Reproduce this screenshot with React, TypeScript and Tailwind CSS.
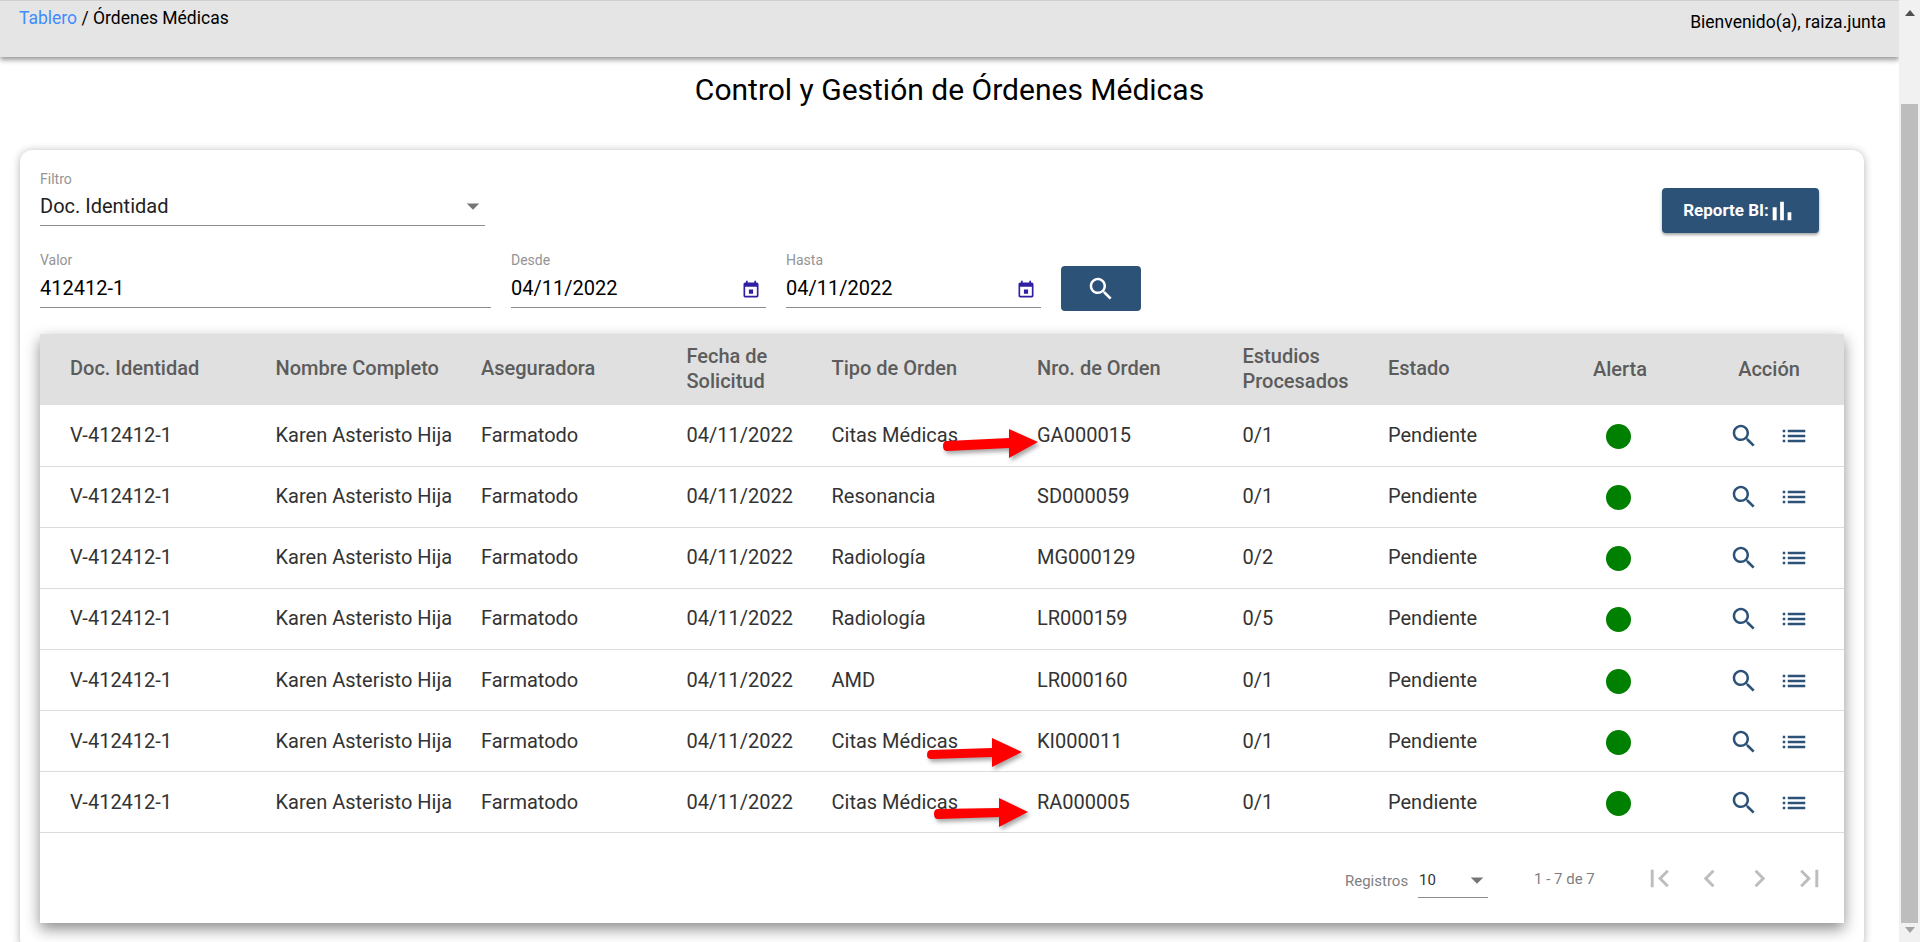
const font = "font-['Roboto',sans-serif]"

const rows = [
  { tipo: "Citas Médicas", orden: "GA000015", estudios: "0/1" },
  { tipo: "Resonancia", orden: "SD000059", estudios: "0/1" },
  { tipo: "Radiología", orden: "MG000129", estudios: "0/2" },
  { tipo: "Radiología", orden: "LR000159", estudios: "0/5" },
  { tipo: "AMD", orden: "LR000160", estudios: "0/1" },
  { tipo: "Citas Médicas", orden: "KI000011", estudios: "0/1" },
  { tipo: "Citas Médicas", orden: "RA000005", estudios: "0/1" },
]

function SearchIcon({ className }: { className: string }) {
  return (
    <svg viewBox="0 0 24 24" className={className} fill="currentColor">
      <path d="M15.5 14h-.79l-.28-.27C15.41 12.59 16 11.11 16 9.5 16 5.91 13.09 3 9.5 3S3 5.91 3 9.5 5.91 16 9.5 16c1.61 0 3.09-.59 4.23-1.57l.27.28v.79l5 4.99L20.49 19l-4.99-5zm-6 0C7.01 14 5 11.99 5 9.5S7.01 5 9.5 5 14 7.01 14 9.5 11.99 14 9.5 14z" />
    </svg>
  )
}

function ListIcon({ className }: { className: string }) {
  return (
    <svg viewBox="0 0 24 24" className={className} fill="currentColor">
      <path d="M3 13h2v-2H3v2zm0 4h2v-2H3v2zm0-8h2V7H3v2zm4 4h14v-2H7v2zm0 4h14v-2H7v2zM7 7v2h14V7H7z" />
    </svg>
  )
}

function CalendarIcon() {
  return (
    <svg viewBox="0 0 24 24" className="w-[20px] h-[20px] text-[#2f1fa3]" fill="currentColor">
      <path d="M14.5 11.5h-5v5h5v-5zM16 1v2H8V1H6v2H5c-1.11 0-1.99.9-1.99 2L3 19c0 1.1.89 2 2 2h14c1.1 0 2-.9 2-2V5c0-1.1-.9-2-2-2h-1V1h-2zm3 18H5V8h14v11z" />
    </svg>
  )
}

function Caret({ className }: { className: string }) {
  return (
    <svg viewBox="0 0 24 24" className={className} fill="currentColor">
      <path d="M7 10l5 5 5-5z" />
    </svg>
  )
}

function DateField({ label, width }: { label: string; width: string }) {
  return (
    <div className={width}>
      <div className="text-[14px] leading-[16px] -mt-[1px] mb-[1px] text-[#949494]">{label}</div>
      <div className="flex items-center justify-between h-[39px] border-b border-[#8c8c8c]">
        <span className="text-[20px] text-black">04/11/2022</span>
        <span className="mr-[5px] mt-[3px]">
          <CalendarIcon />
        </span>
      </div>
    </div>
  )
}

function Arrows() {
  return (
    <svg className="absolute left-0 top-0 w-[1920px] h-[942px] pointer-events-none drop-shadow-[2px_3px_2px_rgba(0,0,0,0.35)]" viewBox="0 0 1920 942">
      <path fill="#ff0000" d="M947 441 L1009 438 L1009 429 L1038 442 L1009 458 L1009 448 L947 451 Q943 451 943 446 Q943 441 947 441 Z" />
      <path fill="#ff0000" d="M931 750 L992 748 L992 738 L1022 752 L992 767 L992 757 L931 759 Q927 759 927 755 Q927 750 931 750 Z" />
      <path fill="#ff0000" d="M938 809 L999 808 L999 798 L1028 812 L999 827 L999 817 L938 819 Q934 819 934 814 Q934 809 938 809 Z" />
    </svg>
  )
}

export default function App() {
  const cols = ["w-[205.5px]", "w-[205.5px]", "w-[205.5px]", "w-[145px]", "w-[205.5px]", "w-[205.5px]", "w-[145.5px]", "w-[188px]", "w-[148px]", "w-[150px]"]
  const headers = ["Doc. Identidad", "Nombre Completo", "Aseguradora", "Fecha de Solicitud", "Tipo de Orden", "Nro. de Orden", "Estudios Procesados", "Estado"]

  return (
    <div className={`relative flex h-[942px] w-[1920px] overflow-hidden bg-white ${font}`}>
      <div className="flex-1 flex flex-col min-w-0">
        <header className="flex justify-between h-[57px] shrink-0 bg-[#e5e5e5] border-t border-[#cfcfcf] shadow-[0_3px_5px_rgba(0,0,0,0.4)] pl-[19px] pr-[13px]">
          <div className="text-[17.5px] leading-[34px] text-black">
            <span className="text-[#3f8cff]">Tablero</span> / Órdenes Médicas
          </div>
          <div className="text-[17.5px] leading-[42px] text-black">Bienvenido(a), raiza.junta</div>
        </header>

        <h1 className="h-[93px] shrink-0 pt-[14px] text-center text-[30px] leading-[38px] font-normal text-black">
          Control y Gestión de Órdenes Médicas
        </h1>

        <div className="ml-[20px] mr-[35px] h-[800px] shrink-0 rounded-[12px] bg-white shadow-[0_1px_8px_rgba(0,0,0,0.3)] px-[20px] pt-[21px]">
          <div className="flex justify-between">
            <div className="w-[445px]">
              <div className="text-[14px] leading-[16px] text-[#949494]">Filtro</div>
              <div className="flex items-center justify-between h-[39px] border-b border-[#8c8c8c]">
                <span className="text-[20px] text-[#222]">Doc. Identidad</span>
                <Caret className="w-[30px] h-[30px] text-[#757575] -mr-[3px]" />
              </div>
            </div>
            <button className="flex items-center justify-center mt-[17px] mr-[25px] h-[45px] w-[157px] rounded-[4px] bg-[#2c5278] text-white text-[17px] font-bold shadow-[0_2px_3px_rgba(0,0,0,0.35)]">
              Reporte BI:
              <svg viewBox="0 0 24 24" className="w-[32px] h-[32px] -ml-[3px]" fill="currentColor">
                <path d="M5 9.2h3V19H5zM10.6 5h2.8v14h-2.8zm5.6 8H19v6h-2.8z" />
              </svg>
            </button>
          </div>

          <div className="flex items-end mt-[20px] gap-[20px]">
            <div className="w-[451px]">
              <div className="text-[14px] leading-[16px] -mt-[1px] mb-[1px] text-[#949494]">Valor</div>
              <div className="flex items-center h-[39px] border-b border-[#8c8c8c] text-[20px] text-black">412412-1</div>
            </div>
            <DateField label="Desde" width="w-[255px]" />
            <DateField label="Hasta" width="w-[255px]" />
            <button className="flex items-center justify-center w-[80px] h-[45px] rounded-[4px] bg-[#2c5278] text-white -mb-[3px]">
              <SearchIcon className="w-[30px] h-[30px]" />
            </button>
          </div>

          <div className="mt-[26px] h-[589px] w-[1804px] bg-white shadow-[0_6px_14px_rgba(0,0,0,0.45)]">
            <table className="table-fixed w-full border-collapse text-[20px]">
              <colgroup>
                {cols.map((c, i) => (
                  <col key={i} className={c} />
                ))}
              </colgroup>
              <thead>
                <tr className="h-[71px] bg-[#e0e0e0] text-[#5c5c5c]">
                  {headers.map((h) => (
                    <th key={h} className="pl-[30px] pr-[10px] pb-[2px] text-left font-medium leading-[25px]">
                      {h}
                    </th>
                  ))}
                  <th className="pb-[2px] text-center font-medium">Alerta</th>
                  <th className="pb-[2px] text-center font-medium">Acción</th>
                </tr>
              </thead>
              <tbody className="text-[#333]">
                {rows.map((r) => (
                  <tr key={r.orden} className="h-[61.14px] border-b border-[#dcdcdc]">
                    <td className="pl-[30px] pb-[1px]">V-412412-1</td>
                    <td className="pl-[30px] pb-[1px] whitespace-nowrap">Karen Asteristo Hija</td>
                    <td className="pl-[30px] pb-[1px]">Farmatodo</td>
                    <td className="pl-[30px] pb-[1px]">04/11/2022</td>
                    <td className="pl-[30px] pb-[1px] whitespace-nowrap">{r.tipo}</td>
                    <td className="pl-[30px] pb-[1px]">{r.orden}</td>
                    <td className="pl-[30px] pb-[1px]">{r.estudios}</td>
                    <td className="pl-[30px] pb-[1px]">Pendiente</td>
                    <td>
                      <div className="ml-[60px] mt-[2px] h-[25px] w-[25px] rounded-full bg-[#008000]" />
                    </td>
                    <td>
                      <div className="flex justify-center gap-[20px] mt-[1px] text-[#2c5278]">
                        <SearchIcon className="w-[30px] h-[30px]" />
                        <ListIcon className="w-[30px] h-[30px]" />
                      </div>
                    </td>
                  </tr>
                ))}
              </tbody>
            </table>

            <div className="flex items-center h-[91px] pl-[1305px] text-[15px] text-[#7f7f7f]">
              <span className="mt-[4px] w-[73px]">Registros</span>
              <div className="flex items-center justify-between w-[70px] h-[34px] mt-[4px] border-b border-[#8c8c8c] pl-[1px]">
                <span className="text-[#333]">10</span>
                <Caret className="w-[30px] h-[30px] text-[#757575] -mr-[4px]" />
              </div>
              <span className="ml-[46px] w-[60px] whitespace-nowrap">1 - 7 de 7</span>
              <div className="flex items-center ml-[48px] gap-[15px] text-[#bdbdbd]">
                <svg viewBox="0 0 24 24" className="w-[35px] h-[35px]" fill="currentColor"><path d="M18.41 16.59L13.82 12l4.59-4.59L17 6l-6 6 6 6zM6 6h2v12H6z" /></svg>
                <svg viewBox="0 0 24 24" className="w-[35px] h-[35px]" fill="currentColor"><path d="M15.41 7.41L14 6l-6 6 6 6 1.41-1.41L10.83 12z" /></svg>
                <svg viewBox="0 0 24 24" className="w-[35px] h-[35px]" fill="currentColor"><path d="M10 6L8.59 7.41 13.17 12l-4.58 4.59L10 18l6-6z" /></svg>
                <svg viewBox="0 0 24 24" className="w-[35px] h-[35px]" fill="currentColor"><path d="M5.59 7.41L10.18 12l-4.59 4.59L7 18l6-6-6-6zM16 6h2v12h-2z" /></svg>
              </div>
            </div>
          </div>
        </div>
      </div>

      <div className="flex flex-col items-center w-[21px] shrink-0 bg-[#f1f1f1] h-full">
        <div className="flex h-[104px] w-full justify-center pt-[10px]">
          <svg viewBox="0 0 10 6" className="w-[10px] h-[6px] text-[#505050]" fill="currentColor"><path d="M5 0l5 6H0z" /></svg>
        </div>
        <div className="w-[17px] h-[819px] bg-[#bdbdbd]" />
        <div className="flex flex-1 w-full justify-center pt-[4px]">
          <svg viewBox="0 0 10 6" className="w-[10px] h-[6px] text-[#a3a3a3]" fill="currentColor"><path d="M0 0h10L5 6z" /></svg>
        </div>
      </div>

      <Arrows />
    </div>
  )
}
